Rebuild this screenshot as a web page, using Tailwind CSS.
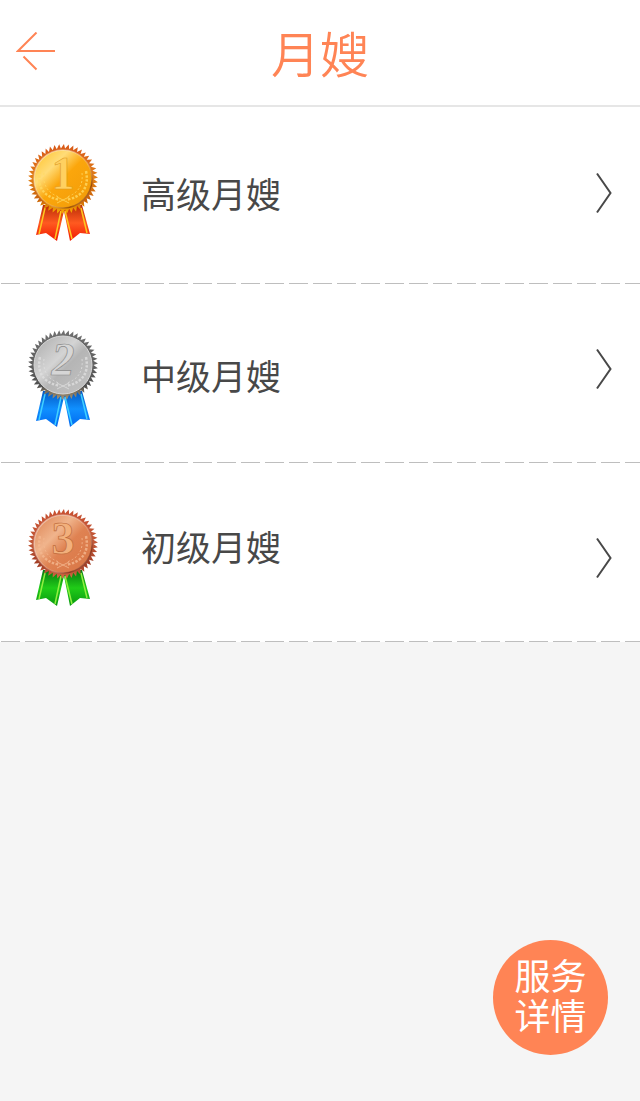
<!DOCTYPE html>
<html lang="zh-CN">
<head>
<meta charset="utf-8">
<meta name="viewport" content="width=device-width, initial-scale=1">
<title>月嫂</title>
<script src="https://cdn.jsdelivr.net/npm/@tailwindcss/browser@4"></script>
</head>
<body class="flex min-h-screen flex-col bg-[#f5f5f5] font-['Noto_Sans_CJK_SC',sans-serif] text-[#484848]">
<svg class="absolute size-0" aria-hidden="true">
  <defs>
    <linearGradient id="gold" x1="0" y1="0" x2="1" y2="1"><stop offset="0" stop-color="#ffc020"/><stop offset=".3" stop-color="#ffdc78"/><stop offset=".5" stop-color="#fba60c"/><stop offset="1" stop-color="#f09a08"/></linearGradient>
    <linearGradient id="silver" x1="0" y1="0" x2="1" y2="1"><stop offset="0" stop-color="#aaaaaa"/><stop offset=".4" stop-color="#d4d4d4"/><stop offset=".55" stop-color="#b5b5b5"/><stop offset="1" stop-color="#c4c4c4"/></linearGradient>
    <linearGradient id="bronze" x1="0" y1="0" x2="1" y2="1"><stop offset="0" stop-color="#dc8050"/><stop offset=".35" stop-color="#f0b48c"/><stop offset=".55" stop-color="#df8252"/><stop offset="1" stop-color="#d87444"/></linearGradient>
    <linearGradient id="goldEdge" x1="0" y1="0" x2="0" y2="1"><stop offset="0" stop-color="#d85818"/><stop offset=".5" stop-color="#e08018"/><stop offset=".8" stop-color="#c86008"/><stop offset="1" stop-color="#ffb400"/></linearGradient>
    <linearGradient id="silverEdge" x1="0" y1="0" x2="0" y2="1"><stop offset="0" stop-color="#707070"/><stop offset=".5" stop-color="#606060"/><stop offset=".8" stop-color="#505050"/><stop offset="1" stop-color="#b09870"/></linearGradient>
    <linearGradient id="bronzeEdge" x1="0" y1="0" x2="0" y2="1"><stop offset="0" stop-color="#c85030"/><stop offset=".5" stop-color="#c05838"/><stop offset=".8" stop-color="#a03c24"/><stop offset="1" stop-color="#dc7048"/></linearGradient>
    <linearGradient id="rimShade" x1="0" y1="0" x2="1" y2="1"><stop offset="0" stop-color="#ffffff" stop-opacity=".5"/><stop offset=".6" stop-color="#ffffff" stop-opacity=".2"/><stop offset=".8" stop-color="#501000" stop-opacity=".5"/><stop offset="1" stop-color="#ffffff" stop-opacity=".2"/></linearGradient>
    <linearGradient id="red" x1="0" y1="0" x2="0" y2="1"><stop offset="0" stop-color="#b82c08"/><stop offset=".5" stop-color="#ff5a20"/><stop offset="1" stop-color="#f01800"/></linearGradient>
    <linearGradient id="blue" x1="0" y1="0" x2="0" y2="1"><stop offset="0" stop-color="#0458c0"/><stop offset=".5" stop-color="#1090ff"/><stop offset="1" stop-color="#0068f0"/></linearGradient>
    <linearGradient id="green" x1="0" y1="0" x2="0" y2="1"><stop offset="0" stop-color="#087810"/><stop offset=".5" stop-color="#20cc18"/><stop offset="1" stop-color="#089810"/></linearGradient>
    <path id="ribbons" d="M15 62 8 92 18 90 29 98 36 68 42 98 52 90 62 91 54 62Z"/>
    <path id="stripes" d="M17 65 11 91M33 68 27 96M37 68 44 96M53 65 59 90"/>
    <g id="laurel">
      <path stroke-dasharray="2.5 1.500" stroke-width="2.500" d="M12 28q-5 24 20 29M58 28q5 24-20 29"/>
      <path stroke-dasharray="2 2" d="M16 30q-2 18 15 24M54 30q2 18-15 24"/>
      <path d="m29 54 12 6m0-6-12 6"/>
    </g>
  </defs>
</svg>

<header class="grid grid-cols-[1fr_auto_1fr] items-center border-b-2 border-[#e6e6e6] bg-white px-4 pt-0.5 pb-[3px]">
  <button type="button" aria-label="返回" class="h-10 w-10 text-[#ff8455]">
    <svg viewBox="0 0 40 40" class="block size-10" fill="none" stroke="currentColor" stroke-width="2"><path d="M20.500 0.500 2 19H39M7.500 24.500 20.500 37.500"/></svg>
  </button>
  <h1 class="text-[49px] leading-[100px] font-[350] text-[#ff8455]">月嫂</h1>
</header>

<main>
  <ul>
    <li class="bg-white">
      <a href="#senior" class="flex h-[176px] items-center px-7 pb-1">
        <svg viewBox="0 0 70 100" class="h-[100px] w-[70px] shrink-0" role="img" aria-label="金牌">
          <use href="#ribbons" fill="url(#red)"/><use href="#stripes" stroke="#ffc820" stroke-width="1.500"/>
          <polygon data-teeth fill="url(#goldEdge)"/>
          <circle cx="35" cy="36" r="29" fill="url(#gold)" stroke="url(#rimShade)" stroke-width="1.500"/>
          <use href="#laurel" fill="none" stroke="#ffd860" stroke-opacity=".8"/>
          <text x="35" y="46" text-anchor="middle" class="font-['Liberation_Serif',serif] text-[46px] font-bold" fill="#ffd060" stroke="#e09a20" stroke-width=".6">1</text>
        </svg>
        <span class="ml-[43px] flex-1 text-[35px] leading-[52px]">高级月嫂</span>
        <svg viewBox="0 0 18 42" class="h-[42px] w-[18px] shrink-0" fill="none" stroke="currentColor" stroke-width="2" aria-hidden="true"><path d="M3 1.500 16.500 21 3 40.500"/></svg>
      </a>
      <div class="h-px bg-[repeating-linear-gradient(to_right,#ffffff_0px,#ffffff_1px,#bebebe_1px,#bebebe_20px,#ffffff_20px,#ffffff_24px)]"></div>
    </li>
    <li class="bg-white">
      <a href="#middle" class="flex h-[178px] items-center px-7 pt-3">
        <svg viewBox="0 0 70 100" class="h-[100px] w-[70px] shrink-0" role="img" aria-label="银牌">
          <use href="#ribbons" fill="url(#blue)"/><use href="#stripes" stroke="#40d0ff" stroke-width="1.500"/>
          <polygon data-teeth fill="url(#silverEdge)"/>
          <circle cx="35" cy="36" r="29" fill="url(#silver)" stroke="#d8d8d8" stroke-width="1"/>
          <use href="#laurel" fill="none" stroke="#dedede" stroke-opacity=".8"/>
          <text x="35" y="46" text-anchor="middle" class="font-['Liberation_Serif',serif] text-[46px] font-bold italic" fill="#d6d6d6" stroke="#8c8c8c" stroke-width=".7">2</text>
        </svg>
        <span class="mb-2 ml-[43px] flex-1 text-[35px] leading-[52px]">中级月嫂</span>
        <svg viewBox="0 0 18 42" class="mb-5 h-[42px] w-[18px] shrink-0" fill="none" stroke="currentColor" stroke-width="2" aria-hidden="true"><path d="M3 1.500 16.500 21 3 40.500"/></svg>
      </a>
      <div class="h-px bg-[repeating-linear-gradient(to_right,#ffffff_0px,#ffffff_1px,#bebebe_1px,#bebebe_20px,#ffffff_20px,#ffffff_24px)]"></div>
    </li>
    <li class="bg-white">
      <a href="#junior" class="flex h-[178px] items-center px-7 pt-3">
        <svg viewBox="0 0 70 100" class="h-[100px] w-[70px] shrink-0" role="img" aria-label="铜牌">
          <use href="#ribbons" fill="url(#green)"/><use href="#stripes" stroke="#90f040" stroke-width="1.500"/>
          <polygon data-teeth fill="url(#bronzeEdge)"/>
          <circle cx="35" cy="36" r="29" fill="url(#bronze)" stroke="url(#rimShade)" stroke-width="1.500"/>
          <use href="#laurel" fill="none" stroke="#f4b890" stroke-opacity=".8"/>
          <text x="35" y="46" text-anchor="middle" class="font-['Liberation_Serif',serif] text-[46px] font-bold" fill="#f2b07c" stroke="#c06c3c" stroke-width=".7">3</text>
        </svg>
        <span class="mb-6 ml-[43px] flex-1 text-[35px] leading-[52px]">初级月嫂</span>
        <svg viewBox="0 0 18 42" class="h-[42px] w-[18px] shrink-0" fill="none" stroke="currentColor" stroke-width="2" aria-hidden="true"><path d="M3 1.500 16.500 21 3 40.500"/></svg>
      </a>
      <div class="h-px bg-[repeating-linear-gradient(to_right,#ffffff_0px,#ffffff_1px,#bebebe_1px,#bebebe_20px,#ffffff_20px,#ffffff_24px)]"></div>
    </li>
  </ul>
</main>

<button type="button" class="mt-auto mr-8 mb-[46px] size-[115px] self-end rounded-full bg-[#ff8455] pb-2 text-center text-[36px] leading-10 text-white">服务<br>详情</button>

<script>
  // Serrated rim of each medal: slanted teeth around the centre (35, 36).
  const count = 46, points = [];
  for (let i = 0; i < count; i++) {
    for (const [shift, r] of [[0, 30.5], [0.7, 35]]) {
      const a = (i + shift) / count * 2 * Math.PI;
      points.push((35 + r * Math.cos(a)).toFixed(2) + ',' + (36 + r * Math.sin(a)).toFixed(2));
    }
  }
  document.querySelectorAll('[data-teeth]').forEach(p => p.setAttribute('points', points.join(' ')));
</script>
</body>
</html>
